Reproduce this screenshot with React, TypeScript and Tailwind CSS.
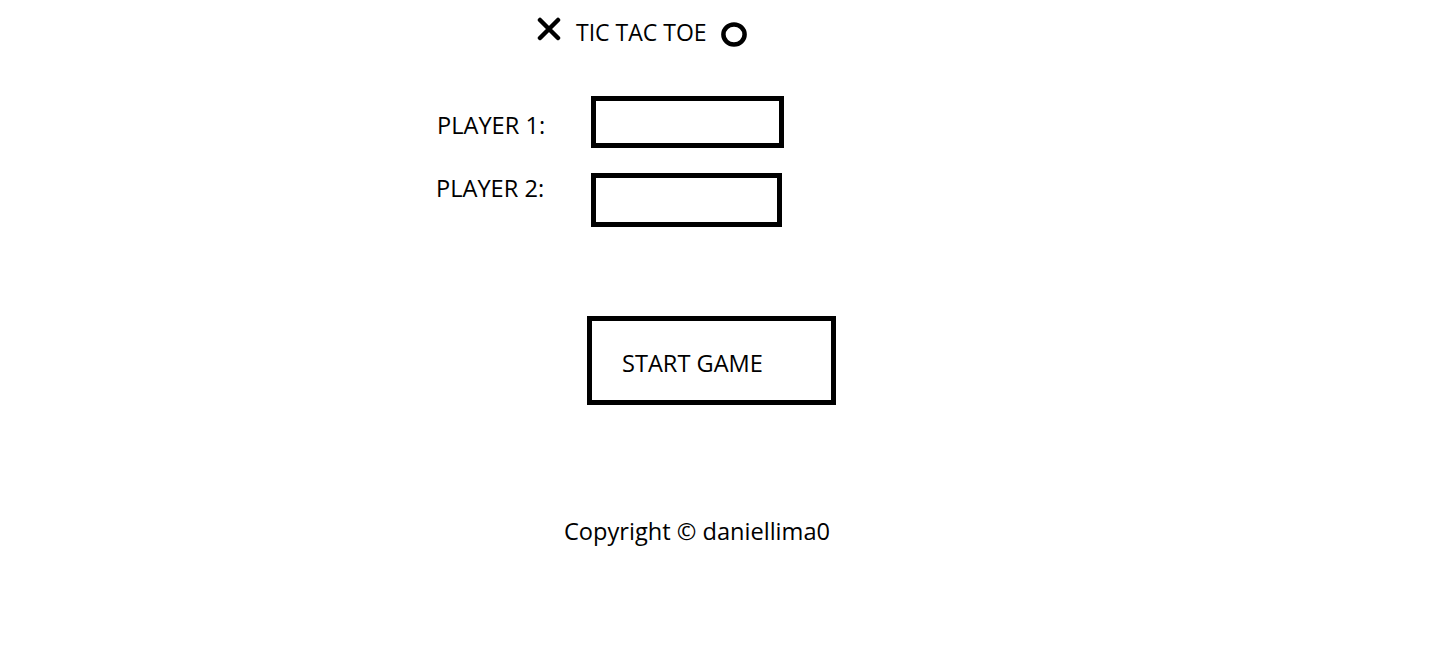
import { useState } from 'react';

// Little hand-drawn marks used around the title
function CrossMark() {
  return (
    <svg width="24" height="24" viewBox="0 0 24 24" className="block shrink-0">
      <path d="M3 3 L21 21 M21 3 L3 21" stroke="black" strokeWidth="4.5" strokeLinecap="round" fill="none" />
    </svg>
  );
}

function NoughtMark() {
  return (
    <svg width="26" height="25" viewBox="0 0 26 25" className="block shrink-0">
      <ellipse cx="13" cy="12.5" rx="10.6" ry="10.1" stroke="black" strokeWidth="4.5" fill="none" />
    </svg>
  );
}

interface PlayerRowProps {
  label: string;
  value: string;
  onChange: (v: string) => void;
  inputClass: string;
  labelClass: string;
}

function PlayerRow({ label, value, onChange, inputClass, labelClass }: PlayerRowProps) {
  return (
    <div className="flex items-start">
      <label className={`w-[154px] shrink-0 leading-[32px] ${labelClass}`}>{label}</label>
      <input
        type="text"
        value={value}
        onChange={e => onChange(e.target.value)}
        className={`border-[5px] border-black bg-white outline-none px-2 text-[20px] ${inputClass}`}
      />
    </div>
  );
}

export default function App() {
  const [player1, setPlayer1] = useState('');
  const [player2, setPlayer2] = useState('');

  return (
    <div
      className="min-h-[657px] w-full bg-white text-black text-[23.6px]"
      style={{ fontFamily: '"Open Sans", "Noto Sans", sans-serif' }}
    >
      <div className="flex flex-col items-start pl-[437px]">
        {/* Title */}
        <div className="flex items-start mt-[17px] ml-[100px] text-[23px]">
          <CrossMark />
          <h1 className="ml-[15px] leading-[32px] -mt-[1px] font-normal">TIC TAC TOE</h1>
          <div className="ml-[14px] mt-[5px]">
            <NoughtMark />
          </div>
        </div>

        {/* Player names */}
        <div className="flex flex-col gap-[25px] mt-[48px]">
          <PlayerRow
            label="PLAYER 1:"
            value={player1}
            onChange={setPlayer1}
            labelClass="mt-[13px]"
            inputClass="w-[193px] h-[52px]"
          />
          <PlayerRow
            label="PLAYER 2:"
            value={player2}
            onChange={setPlayer2}
            labelClass="-ml-[1px] -mt-[1px] w-[155px]"
            inputClass="w-[191px] h-[54px]"
          />
        </div>

        {/* Start */}
        <button className="mt-[89px] ml-[150px] w-[249px] h-[89px] border-[5px] border-black flex items-center pl-[30px] pt-[4px] leading-[32px] text-left">
          START GAME
        </button>

        <footer className="mt-[110px] ml-[127px] leading-[32px]">Copyright © daniellima0</footer>
      </div>
    </div>
  );
}
